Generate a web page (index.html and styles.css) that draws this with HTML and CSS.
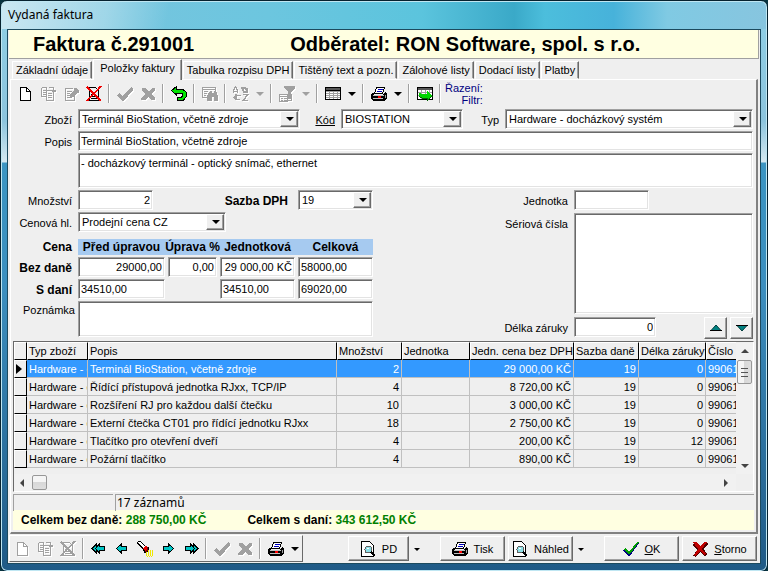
FILE: index.html
```html
<!DOCTYPE html>
<html lang="cs">
<head>
  <meta charset="UTF-8" />
  <meta name="viewport" content="width=device-width, initial-scale=1" />
  <title>Vydaná faktura</title>
  <link rel="stylesheet" href="styles.css">
</head>
<body>

  <!-- Icon set -->
  <svg class="icon-defs" aria-hidden="true">
    <symbol id="i-doc" viewBox="0 0 16 16">
      <path d="M3.5 1.5h6l4 4v9h-10z" fill="#fff" stroke="currentColor" />
      <path d="M9.500 1.500v4h4" fill="none" stroke="currentColor" />
    </symbol>
    <symbol id="i-copy" viewBox="0 0 16 16">
      <path d="M1.500 1.500h5v2M1.500 1.500v9h4M3 4.500h3M3 6.500h3M3 8.500h3M6.500 4.500h7v10h-7zM8 7.500h4M8 9.500h4M8 11.500h4M13 2v3h2.500M9 1.500h4v3" fill="none" stroke="currentColor" />
      <path d="M11 4h5l-2.500 3z" fill="currentColor" />
    </symbol>
    <symbol id="i-edit" viewBox="0 0 16 16">
      <path d="M2.500 2.500h7M2.500 2v12.500h9V9M4 5.500h5M4 7.500h3M4 9.500h3M4 11.500h5" fill="none" stroke="currentColor" />
      <path d="M7 11V8l4-4V2h2l3 3v2h-2l-4 4z" fill="currentColor" />
    </symbol>
    <symbol id="i-delete" viewBox="0 0 16 16">
      <path d="M3.500 1.500h6l3 3v10h-9zM5 6.500h5M5 8.500h5M5 10.500h6M5 12.500h6" fill="none" stroke="currentColor" />
      <path class="cross" d="M1 1l14 14M15 0L1 15" fill="none" stroke-width="1.6" />
    </symbol>
    <symbol id="i-check" viewBox="0 0 16 16">
      <path d="M0 9l2-2 4 3 8-9 2 1v2L7 15H5z" fill="currentColor" />
    </symbol>
    <symbol id="i-cross" viewBox="0 0 16 16">
      <path d="M2 2h4l3 4 3-4h3v2l-4 4 4 4v2h-4l-3-3-3 3H1v-2l4-4-3-4z" fill="currentColor" />
    </symbol>
    <symbol id="i-undo" viewBox="0 0 16 16">
      <path d="M.5 4.500l5-4v2.500h6l3.500 3v5l-3 3.500H6.500v-3.500h4l1-1V8l-1-1h-5v2z" fill="#00e400" stroke="#000" />
    </symbol>
    <symbol id="i-find" viewBox="0 0 16 16">
      <path d="M.5 1.500h13v3M.5 1v10.500h4M0 3h14M2 5.500h4M2 7.500h3M2 9.500h2" fill="none" stroke="currentColor" />
      <path d="M6 7l2-2h2v2h2V5h2l2 5v5h-4v-4h-2v4H5v-4z" fill="currentColor" />
    </symbol>
    <symbol id="i-sort" viewBox="0 0 16 16">
      <path d="M.5 7V4l2-3 2 3v3M1 5.500h3M8 2h4l2 2M14 2v4h-4M8 9.500h-5l-2 2 2 2h4M3 8v6M10 8.500h5l-5 6h5M9 2l2 4" fill="none" stroke="currentColor" stroke-width="1.500" />
    </symbol>
    <symbol id="i-filter" viewBox="0 0 16 16">
      <path d="M5 0h11v2l-4 4v7h-3V6L5 2z" fill="currentColor" />
      <path d="M.5 8.500h8v7h-8zM1 10.500h8M2 12.500h2M5 12.500h3M2 14.500h2M5 14.500h3M12 8v6H9" fill="none" stroke="currentColor" />
    </symbol>
    <symbol id="i-grid" viewBox="0 0 16 16">
      <path d="M.5 1.500h15v12H.5z" fill="#fff" stroke="#000" />
      <path d="M1 2h14v2H1z" fill="#555" />
      <path d="M1 5.500h14M1 7.500h14M1 9.500h14M1 11.500h14M4.500 4v9M8.500 4v9M12.500 4v9" stroke="#a0a0a0" fill="none" />
      <path d="M0 4.500h16" stroke="#000" />
    </symbol>
    <symbol id="i-print" viewBox="0 0 16 16">
      <path d="M5.500 1.500h8l-2 6h-8z" fill="#fff" stroke="#000" />
      <path d="M7 3.500h5M6 5.500h5" stroke="#0000c0" fill="none" />
      <path d="M1 7h2v2h9l2-3h1l1 2v4l-3 3H2l-2-2V9z" fill="#000" />
      <path d="M2 9.500h11M2 12.500h10" stroke="#c0c0c0" fill="none" />
      <path d="M14 8.500h1v3l-1 1z" fill="#a0a0a0" />
      <path d="M7 10h3v2H7z" fill="#f00" />
    </symbol>
    <symbol id="i-export" viewBox="0 0 16 16">
      <path d="M.5 1.500h15v12H.5z" fill="#fff" stroke="#000" />
      <path d="M1 2h14v2H1z" fill="#555" />
      <path d="M1 6.500h14M1 9.500h14M4.500 4v9M8.500 4v9M12.500 4v9" stroke="#a0a0a0" fill="none" />
      <path d="M2 7l3 1h5V5l6 5-6 5v-3H5l-3-2z" fill="#00d400" />
      <path d="M2 10.500l3 1.500h5v2.500l5.500-4.500" stroke="#006000" fill="none" />
    </symbol>
    <symbol id="i-prev" viewBox="0 0 16 16">
      <path d="M2.500 7.500l5-4.500v2.500h5v4h-5V12z" fill="#00c4c4" stroke="#000" />
    </symbol>
    <symbol id="i-next" viewBox="0 0 16 16">
      <path d="M13.500 7.500l-5-4.500v2.500h-5v4h5V12z" fill="#00c4c4" stroke="#000" />
    </symbol>
    <symbol id="i-first" viewBox="0 0 16 16">
      <path d="M1 7.500L5.500 3v2.500L8.500 3v2.500h5v4h-5V12l-3-2.500V12z" fill="#00c4c4" stroke="#000" />
      <path d="M8 4L4.500 7.500 8 11" fill="none" stroke="#000" />
    </symbol>
    <symbol id="i-last" viewBox="0 0 16 16">
      <path d="M15 7.500L10.500 3v2.500L7.500 3v2.500h-5v4h5V12l3-2.500V12z" fill="#00c4c4" stroke="#000" />
      <path d="M8 4l3.500 3.500L8 11" fill="none" stroke="#000" />
    </symbol>
    <symbol id="i-torch" viewBox="0 0 16 16">
      <path d="M1.500.5h2l6 6 2 .5v3l-2 1h-2l-1-3-6-6z" fill="#fff" stroke="#000" />
      <path d="M6 7l3-2 2 2-3 3z" fill="#e00000" />
      <path d="M10.500 6v3l-2 2" stroke="#800000" fill="none" />
      <path d="M11 10h5M9 12h7M9 14h7M10 15.500h6" stroke="#f0e800" stroke-width="1.500" stroke-dasharray="1 1" fill="none" />
    </symbol>
    <symbol id="i-preview" viewBox="0 0 16 16">
      <path d="M1.500.5h8l4 4v11h-12z" fill="#fff" stroke="#000" />
      <circle cx="8.500" cy="8.500" r="3.500" fill="#8fe0e8" stroke="#606060" />
      <path d="M11 11l4 4" stroke="#000" stroke-width="2" />
      <path d="M7 7h2" stroke="#fff" />
    </symbol>
    <symbol id="i-ok" viewBox="0 0 16 16">
      <path d="M0 9l3-2 3 4 9-10 1 1-9 13H5z" fill="#000080" />
      <path d="M0 8l3-1 3 4 8-10 2 0-9 12H5z" fill="#00a000" />
    </symbol>
    <symbol id="i-no" viewBox="0 0 16 16">
      <path d="M2 2h3l4 4 4-5h2l1 2-4 5 3 5-2 2-5-4-4 5-3-1 4-6-4-5z" fill="#500000" />
      <path d="M1 1h4l3 4 4-4h3l-5 7 4 5-2 1-4-4-4 5-2-1 4-6z" fill="#c00000" />
    </symbol>
  </svg>

  <div class="window">
    <div class="title-bar">Vydaná faktura</div>

    <div class="client">
      <header class="invoice-header">
        <h1>Faktura č.291001</h1>
        <h2>Odběratel: RON Software, spol. s r.o.</h2>
      </header>

      <div class="tabs" role="tablist">
        <button class="tab" role="tab">Základní údaje</button>
        <button class="tab active" role="tab" aria-selected="true">Položky faktury</button>
        <button class="tab" role="tab">Tabulka rozpisu DPH</button>
        <button class="tab" role="tab">Tištěný text a pozn.</button>
        <button class="tab" role="tab">Zálohové listy</button>
        <button class="tab" role="tab">Dodací listy</button>
        <button class="tab" role="tab">Platby</button>
      </div>

      <main class="page">
        <div class="toolbar">
          <button class="tool" aria-label="Nový"><svg><use href="#i-doc" /></svg></button>
          <button class="tool" aria-label="Kopie" disabled><svg><use href="#i-copy" /></svg></button>
          <button class="tool" aria-label="Upravit" disabled><svg><use href="#i-edit" /></svg></button>
          <button class="tool" aria-label="Smazat"><svg><use href="#i-delete" /></svg></button>
          <span class="sep"></span>
          <button class="tool" aria-label="Uložit" disabled><svg><use href="#i-check" /></svg></button>
          <button class="tool" aria-label="Zrušit" disabled><svg><use href="#i-cross" /></svg></button>
          <span class="sep"></span>
          <button class="tool" aria-label="Zpět"><svg><use href="#i-undo" /></svg></button>
          <span class="sep"></span>
          <button class="tool" aria-label="Hledat" disabled><svg><use href="#i-find" /></svg></button>
          <span class="sep"></span>
          <button class="tool" aria-label="Seřadit" disabled><svg><use href="#i-sort" /></svg></button>
          <button class="drop" aria-label="Možnosti řazení" disabled></button>
          <span class="sep"></span>
          <button class="tool" aria-label="Filtrovat" disabled><svg><use href="#i-filter" /></svg></button>
          <button class="drop" aria-label="Možnosti filtru" disabled></button>
          <span class="sep"></span>
          <button class="tool" aria-label="Sloupce"><svg><use href="#i-grid" /></svg></button>
          <button class="drop" aria-label="Možnosti sloupců"></button>
          <span class="sep"></span>
          <button class="tool" aria-label="Tisk"><svg><use href="#i-print" /></svg></button>
          <button class="drop" aria-label="Možnosti tisku"></button>
          <span class="sep"></span>
          <button class="tool" aria-label="Export"><svg><use href="#i-export" /></svg></button>
          <span class="sep"></span>
          <div class="sort-info"><div>Řazení:</div><div>Filtr:</div></div>
        </div>

        <div class="item-form">
          <label for="zbozi">Zboží</label>
          <div class="combo"><select id="zbozi"><option>Terminál BioStation, včetně zdroje</option></select></div>
          <label for="kod" class="underlined">Kód</label>
          <div class="combo"><select id="kod"><option>BIOSTATION</option></select></div>
          <label for="typ">Typ</label>
          <div class="combo"><select id="typ"><option>Hardware - docházkový systém</option></select></div>

          <label for="popis">Popis</label>
          <input type="text" id="popis" class="wide" value="Terminál BioStation, včetně zdroje">
          <textarea class="wide desc" aria-label="Podrobný popis">- docházkový terminál - optický snímač, ethernet</textarea>
        </div>

        <div class="details">
          <div class="prices">
            <label for="mnozstvi">Množství</label>
            <input type="text" id="mnozstvi" class="num short" value="2">
            <label for="sazba" class="bold vat-label">Sazba DPH</label>
            <div class="combo"><select id="sazba"><option>19</option></select></div>

            <label for="hladina">Cenová hl.</label>
            <div class="combo level"><select id="hladina"><option>Prodejní cena CZ</option></select></div>

            <span class="row-label price-head">Cena</span>
            <div class="price-band price-head">
              <span>Před úpravou</span><span>Úprava %</span><span>Jednotková</span><span>Celková</span>
            </div>

            <span class="row-label">Bez daně</span>
            <input type="text" class="num" value="29000,00" aria-label="Bez daně před úpravou">
            <input type="text" class="num" value="0,00" aria-label="Úprava %">
            <input type="text" class="num" value="29 000,00 KČ" aria-label="Bez daně jednotková">
            <input type="text" value="58000,00" aria-label="Bez daně celková">

            <span class="row-label">S daní</span>
            <input type="text" value="34510,00" aria-label="S daní před úpravou">
            <span></span>
            <input type="text" value="34510,00" aria-label="S daní jednotková">
            <input type="text" value="69020,00" aria-label="S daní celková">

            <label for="poznamka" class="note-label">Poznámka</label>
            <textarea id="poznamka" class="note"></textarea>
          </div>

          <div class="stock">
            <label for="jednotka">Jednotka</label>
            <input type="text" id="jednotka" class="short">
            <label for="serie">Sériová čísla</label>
            <textarea id="serie"></textarea>
            <label for="zaruka">Délka záruky</label>
            <div class="warranty">
              <input type="text" id="zaruka" class="num" value="0">
              <button class="raised move up" aria-label="Nahoru"><svg viewBox="0 0 12 8"><path d="M6 1l5 5.500H1z" fill="#008080" stroke="#003c3c" /><path d="M0 6.500h12" stroke="#000" /></svg></button>
              <button class="raised move" aria-label="Dolů"><svg viewBox="0 0 12 8"><path d="M6 7L1 1.500h10z" fill="#008080" stroke="#003c3c" /><path d="M0 1.500h12" stroke="#000" /></svg></button>
            </div>
          </div>
        </div>

        <div class="grid">
          <div class="grid-view">
            <table>
              <colgroup>
                <col class="c-mark"><col class="c-type"><col><col class="c-qty"><col class="c-unit">
                <col class="c-price"><col class="c-vat"><col class="c-warranty"><col class="c-no">
              </colgroup>
              <thead>
                <tr><th></th><th>Typ zboží</th><th>Popis</th><th>Množství</th><th>Jednotka</th><th>Jedn. cena bez DPH</th><th>Sazba daně</th><th>Délka záruky</th><th>Číslo</th></tr>
              </thead>
              <tbody>
                <tr class="selected"><th><i class="marker"></i></th><td>Hardware - d</td><td>Terminál BioStation, včetně zdroje</td><td>2</td><td></td><td>29 000,00 KČ</td><td>19</td><td>0</td><td>99061</td></tr>
                <tr><th></th><td>Hardware - d</td><td>Řídící přístupová jednotka RJxx, TCP/IP</td><td>4</td><td></td><td>8 720,00 KČ</td><td>19</td><td>0</td><td>99061</td></tr>
                <tr><th></th><td>Hardware - d</td><td>Rozšíření RJ pro každou další čtečku</td><td>10</td><td></td><td>3 000,00 KČ</td><td>19</td><td>0</td><td>99061</td></tr>
                <tr><th></th><td>Hardware - d</td><td>Externí čtečka CT01 pro řídící jednotku RJxx</td><td>18</td><td></td><td>2 750,00 KČ</td><td>19</td><td>0</td><td>99061</td></tr>
                <tr><th></th><td>Hardware - d</td><td>Tlačítko pro otevření dveří</td><td>4</td><td></td><td>200,00 KČ</td><td>19</td><td>12</td><td>99061</td></tr>
                <tr><th></th><td>Hardware - d</td><td>Požární tlačítko</td><td>4</td><td></td><td>890,00 KČ</td><td>19</td><td>0</td><td>99061</td></tr>
              </tbody>
            </table>
          </div>
          <div class="vscroll"><i class="arrow-up"></i><i class="thumb"></i><i class="arrow-down"></i></div>
          <div class="hscroll"><i class="arrow-left"></i><i class="thumb"></i><i class="arrow-right"></i></div>
        </div>

        <div class="status">
          <div class="panel"></div>
          <div class="panel">17 záznamů</div>
        </div>
        <div class="totals">
          <div>Celkem bez daně: <b>288 750,00 KČ</b></div>
          <div>Celkem s daní: <b>343 612,50 KČ</b></div>
        </div>
      </main>

      <footer class="bottom">
        <div class="toolbar nav-bar">
          <button class="tool" aria-label="Nová faktura" disabled><svg><use href="#i-doc" /></svg></button>
          <button class="tool" aria-label="Kopie faktury" disabled><svg><use href="#i-copy" /></svg></button>
          <button class="tool" aria-label="Smazat fakturu" disabled><svg><use href="#i-delete" /></svg></button>
          <span class="sep"></span>
          <button class="tool" aria-label="První"><svg><use href="#i-first" /></svg></button>
          <button class="tool" aria-label="Předchozí"><svg><use href="#i-prev" /></svg></button>
          <button class="tool" aria-label="Najít"><svg><use href="#i-torch" /></svg></button>
          <button class="tool" aria-label="Další"><svg><use href="#i-next" /></svg></button>
          <button class="tool" aria-label="Poslední"><svg><use href="#i-last" /></svg></button>
          <span class="sep"></span>
          <button class="tool" aria-label="Potvrdit" disabled><svg><use href="#i-check" /></svg></button>
          <button class="tool" aria-label="Vrátit" disabled><svg><use href="#i-cross" /></svg></button>
          <span class="sep"></span>
          <button class="tool" aria-label="Tisk faktury"><svg><use href="#i-print" /></svg></button>
          <button class="drop" aria-label="Možnosti tisku faktury"></button>
        </div>
        <div class="actions">
          <div class="split">
            <button class="raised action"><svg><use href="#i-preview" /></svg>PD</button>
            <button class="drop small" aria-label="Možnosti PD"></button>
          </div>
          <div class="split">
            <button class="raised action"><svg><use href="#i-print" /></svg>Tisk</button>
            <button class="raised action"><svg><use href="#i-preview" /></svg>Náhled</button>
            <button class="drop small" aria-label="Možnosti náhledu"></button>
          </div>
          <div class="split confirm">
            <button class="raised action"><svg><use href="#i-ok" /></svg><span><u>O</u>K</span></button>
            <button class="raised action"><svg><use href="#i-no" /></svg><span><u>S</u>torno</span></button>
          </div>
        </div>
      </footer>
    </div>
  </div>

</body>
</html>
```
FILE: styles.css
```css
:root {
  --face: #efefef;
  --shadow: #a0a0a0;
  --dark: #696969;
  --light: #e3e3e3;
  --cream: #ffffe1;
  --band: #a6caf0;
  --select: #3399ff;
  --line: #c0c0c0;
}
* {
  box-sizing: border-box;
}
body {
  margin: 0;
  min-height: 100vh;
  display: flex;
  background: #06333f;
  color: #000;
  font: 11px/14px "Liberation Sans", Arial, sans-serif;
}
button, input, select, textarea {
  font: inherit;
  color: inherit;
  margin: 0;
  border-radius: 0;
}
.icon-defs {
  position: absolute;
  width: 0;
  height: 0;
}

/* Window frame */
.window {
  flex: 1;
  min-width: 0;
  display: flex;
  flex-direction: column;
  padding: 1px 6px 7px;
  border: 1px solid #06222f;
  border-radius: 7px;
  box-shadow: inset 0 0 0 1px #bfe6f2;
  background:
    linear-gradient(100deg, rgba(255,255,255,0.6), rgba(255,255,255,0.3) 14%, rgba(255,255,255,0) 22%) top / 100% 28px no-repeat,
    linear-gradient(90deg, #7cc4de, #6cc6df 35%, #5bc4dd 55%, #3aa9c8 67%, #4cbedc 71%, #47b2da 80%, #80cae3 87%, #87c5df) top / 100% 28px no-repeat,
    linear-gradient(180deg, #8fd0e6, #8cc4dd 120px, #d5e9f1 161px, #3c95c2 162px, #3c8fbf 50%, #1f5a86);
}
.title-bar {
  height: 27px;
  padding: 4px 0 0 1px;
  font: 12px/18px "Noto Sans", sans-serif;
}
.client {
  flex: 1;
  display: flex;
  flex-direction: column;
  padding: 0 1px;
  border: 1px solid #1c4a5e;
  background: var(--face);
}
.invoice-header {
  display: flex;
  height: 29px;
  align-items: center;
  gap: 96px;
  padding-left: 24px;
  background: var(--cream);
  border-bottom: 1px solid var(--shadow);
  border-right: 1px solid var(--shadow);
}
.invoice-header h1,
.invoice-header h2 {
  margin: 0;
  font-size: 20px;
  line-height: 26px;
  white-space: nowrap;
}

/* Tabs */
.tabs {
  display: flex;
  align-items: flex-end;
  gap: 1px;
  height: 20px;
  padding-left: 3px;
}
.tab {
  height: 18px;
  padding: 0 3px;
  background: var(--face);
  border: 1px solid;
  border-color: #fff var(--dark) transparent #fff;
  box-shadow: inset -1px 0 0 var(--shadow);
  white-space: nowrap;
}
.tab.active {
  z-index: 1;
  height: 21px;
  margin-bottom: -1px;
  padding: 0 6px 4px;
  border-bottom: 0;
}
.page {
  flex: 1;
  margin: 0 1px;
  padding: 2px;
  border: 1px solid #fff;
  border-right: 2px solid #808080;
  border-bottom: 2px solid #808080;
}

/* Toolbars */
.toolbar {
  display: flex;
  height: 23px;
}
.tool,
.drop {
  width: 23px;
  padding: 0;
  border: 0;
  background: none;
  display: flex;
  align-items: center;
  justify-content: center;
}
.drop {
  width: 15px;
}
.tool svg,
.action svg {
  width: 16px;
  height: 16px;
  flex: none;
  shape-rendering: crispEdges;
}
.cross {
  stroke: var(--cross, #f00000);
}
.tool:disabled {
  --cross: #a0a0a0;
  color: #a0a0a0;
  filter: drop-shadow(1px 1px 0 #fff);
}
.drop::before,
.combo::before {
  content: "";
  border: 4px solid transparent;
  border-top-color: #000;
  border-bottom: 0;
}
.drop.small::before {
  border-width: 3px 3px 0;
}
.drop:disabled::before {
  border-top-color: #a0a0a0;
}
.sep {
  width: 2px;
  margin: 2px 3px;
  background: var(--shadow);
  border-right: 1px solid #fff;
}
.sort-info {
  margin-left: 1px;
  line-height: 12px;
  color: #000080;
  text-align: right;
}

/* Fields */
input, select, textarea {
  display: block;
  width: 100%;
  min-width: 0;
  height: 20px;
  padding: 0 2px;
  background: #fff;
  border: 1px solid;
  border-color: var(--shadow) #fff #fff var(--shadow);
  box-shadow: inset 1px 1px 0 var(--dark), inset -1px -1px 0 var(--light);
  outline: 0;
}
textarea {
  padding: 2px;
  resize: none;
  overflow: hidden;
}
select {
  appearance: none;
  padding: 0 18px 0 3px;
}
.num {
  text-align: right;
}
.combo {
  position: relative;
}
.combo::after {
  content: "";
  position: absolute;
  top: 2px;
  right: 2px;
  bottom: 2px;
  width: 16px;
  background: var(--face);
  border: 1px solid;
  border-color: #fff var(--dark) var(--dark) #fff;
  box-shadow: inset -1px -1px 0 var(--shadow);
  pointer-events: none;
}
.combo::before {
  position: absolute;
  z-index: 1;
  top: 8px;
  right: 6px;
  pointer-events: none;
}
.short {
  width: 75px;
}
.item-form {
  display: grid;
  grid-template-columns: 65px 222fr 41px 122fr 42px 248fr;
  grid-template-rows: 20px 20px 35px;
  gap: 2px 0;
  margin: 4px 1px 2px 0;
}
.item-form label {
  padding: 4px 6px 0 0;
  text-align: right;
}
.underlined {
  text-decoration: underline;
}
.wide {
  grid-column: 2 / -1;
}
.desc {
  height: 35px;
}
.details {
  display: flex;
  justify-content: space-between;
  margin-right: 1px;
}
.prices {
  display: grid;
  grid-template-columns: 62px 87px 49px 75px 75px;
  align-content: start;
  gap: 2px 3px;
}
.prices label,
.row-label {
  padding: 4px 3px 0 0;
  text-align: right;
  white-space: nowrap;
}
.row-label {
  grid-column: 1;
}
.prices .vat-label {
  grid-column: 3 / 5;
  padding-right: 7px;
}
.bold,
.row-label,
.price-band,
.totals {
  font-weight: bold;
  font-size: 12px;
}
.level {
  grid-column: 2 / 5;
  width: 148px;
}
.price-head {
  height: 16px;
  margin-top: 5px;
  padding-top: 1px;
}
.price-band {
  grid-column: 2 / -1;
  display: grid;
  grid-template-columns: 87px 49px 75px 75px;
  gap: 3px;
  background: var(--band);
}
.price-band span {
  display: flex;
  justify-content: center;
  white-space: nowrap;
}
.prices .note-label {
  padding: 2px 0 0;
}
.note {
  grid-column: 2 / -1;
  height: 36px;
}
.stock {
  display: grid;
  grid-template-columns: auto 179px;
  grid-template-rows: 20px 101px 22px;
  gap: 3px 6px;
}
.stock label {
  padding-top: 4px;
  text-align: right;
}
.stock textarea {
  height: 101px;
}
.warranty {
  display: flex;
  gap: 3px;
}
.warranty input {
  width: 82px;
}
.raised {
  background: var(--face);
  border: 1px solid;
  border-color: #fff var(--dark) var(--dark) #fff;
  box-shadow: inset -1px -1px 0 var(--shadow);
}
.move {
  width: 23px;
  height: 22px;
  padding: 0;
  display: flex;
  align-items: center;
  justify-content: center;
}
.move.up {
  margin-left: auto;
}
.move svg {
  width: 12px;
  height: 8px;
}

/* Items grid */
.grid {
  display: grid;
  grid-template-columns: 1fr 17px;
  grid-template-rows: 132px 17px;
  margin-top: 2px;
  border: 1px solid;
  border-color: var(--dark) #fff #fff var(--dark);
}
.grid-view {
  overflow: hidden;
}
table {
  width: 100%;
  table-layout: fixed;
  border-spacing: 0;
}
.c-mark { width: 13px; }
.c-type { width: 61px; }
.c-qty { width: 65px; }
.c-unit { width: 68px; }
.c-price { width: 104px; }
.c-vat { width: 65px; }
.c-warranty { width: 67px; }
.c-no { width: 30px; }
th, td {
  height: 18px;
  padding: 0 2px;
  font-weight: normal;
  text-align: left;
  white-space: nowrap;
  overflow: hidden;
  line-height: 16px;
}
td {
  border: solid var(--line);
  border-width: 0 1px 1px 0;
}
td:nth-child(2) {
  padding-right: 0;
}
td:nth-child(n+4) {
  text-align: right;
}
td:last-child {
  padding-right: 0;
  text-align: left;
}
th {
  border: 1px solid;
  border-color: #fff #000 #000 #fff;
  padding: 0 1px;
}
td:last-child,
th:last-child {
  border-right: 0;
}
.selected td {
  background: var(--select);
  color: #fff;
}
.marker {
  display: block;
  border: solid transparent;
  border-width: 5px 0 5px 6px;
  border-left-color: #000;
}
.vscroll,
.hscroll {
  display: flex;
  align-items: center;
  background: #f1f1f1;
}
.vscroll {
  flex-direction: column;
  padding: 7px 0 6px;
}
.hscroll {
  padding: 0 8px 0 6px;
}
.thumb {
  width: 15px;
  height: 15px;
  border: 1px solid #979797;
  border-radius: 2px;
  background: linear-gradient(#f5f5f5 45%, #d8d8d8 50%, #dedede);
}
.vscroll .thumb {
  height: 24px;
  margin-top: 7px;
  padding: 7px 3px;
  background: linear-gradient(90deg, #f5f5f5 45%, #d8d8d8 50%, #dedede);
}
.vscroll .thumb::before {
  content: "";
  display: block;
  height: 7px;
  border: solid #555;
  border-width: 1px 0;
  background: linear-gradient(#555, #555) center / 100% 1px no-repeat;
}
.arrow-up,
.arrow-down,
.arrow-left,
.arrow-right {
  border: 4px solid transparent;
}
.arrow-up { border-top: 0; border-bottom-color: #444; }
.arrow-down { border-bottom: 0; border-top-color: #444; margin-top: auto; }
.arrow-left { border-left: 0; border-right-color: #444; margin-right: 8px; }
.arrow-right { border-right: 0; border-left-color: #444; margin-left: auto; }

/* Status and totals */
.status {
  display: grid;
  grid-template-columns: 100px 1fr;
  gap: 2px;
  margin-top: 2px;
  height: 16px;
}
.panel {
  border: solid var(--shadow);
  border-width: 1px 0 0 1px;
  padding-left: 1px;
  font: 12px/16px "Noto Sans", sans-serif;
}
.totals {
  display: flex;
  gap: 41px;
  padding: 3px 8px;
  background: var(--cream);
}
.totals b {
  color: #008000;
}

/* Bottom bar */
.bottom {
  display: flex;
  justify-content: space-between;
  padding: 1px 2px 1px 0;
}
.nav-bar {
  height: 27px;
  border: 1px solid;
  border-color: #fff var(--dark) var(--dark) #fff;
}
.actions,
.split {
  display: flex;
}
.actions {
  gap: 16px;
  padding-top: 1px;
}
.action {
  display: flex;
  align-items: center;
  justify-content: center;
  gap: 6px;
  min-width: 61px;
  height: 25px;
  padding: 0 3px;
}
.action + .action {
  margin-left: 3px;
}
.split:nth-child(2) .action {
  width: 65px;
}
.confirm .action {
  width: 75px;
}
```
